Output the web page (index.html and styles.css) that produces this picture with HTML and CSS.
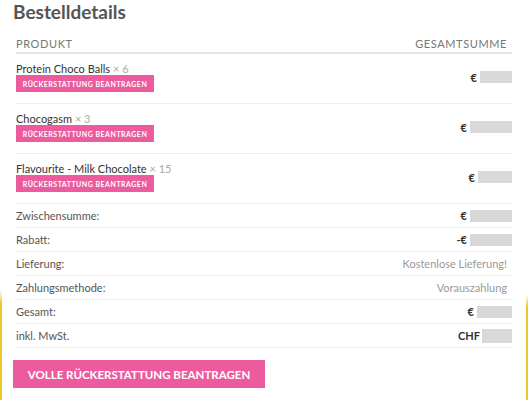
FILE: index.html
```html
<!DOCTYPE html>
<html lang="de">
<head>
<meta charset="utf-8">
<title>Bestelldetails</title>
<link rel="stylesheet" href="styles.css">
</head>
<body>
<div class="page">
  <h2 class="title">Bestelldetails</h2>
  <div class="table">
    <div class="row head">
      <span>Produkt</span>
      <span>Gesamtsumme</span>
    </div>
    <div class="row item">
      <div class="prod">
        <div class="name">Protein Choco Balls <span class="qty">× 6</span></div>
        <button class="refund">Rückerstattung beantragen</button>
      </div>
      <div class="amt"><span class="cur">€</span><span class="mask" style="width:32px"></span></div>
    </div>
    <div class="row item">
      <div class="prod">
        <div class="name">Chocogasm <span class="qty">× 3</span></div>
        <button class="refund">Rückerstattung beantragen</button>
      </div>
      <div class="amt"><span class="cur">€</span><span class="mask" style="width:42px"></span></div>
    </div>
    <div class="row item">
      <div class="prod">
        <div class="name">Flavourite - Milk Chocolate <span class="qty">× 15</span></div>
        <button class="refund">Rückerstattung beantragen</button>
      </div>
      <div class="amt"><span class="cur">€</span><span class="mask" style="width:34px"></span></div>
    </div>
    <div class="row tot">
      <span class="label">Zwischensumme:</span>
      <div class="amt"><span class="cur">€</span><span class="mask" style="width:42px"></span></div>
    </div>
    <div class="row tot">
      <span class="label">Rabatt:</span>
      <div class="amt"><span class="cur">-€</span><span class="mask" style="width:42px"></span></div>
    </div>
    <div class="row tot">
      <span class="label">Lieferung:</span>
      <span class="val">Kostenlose Lieferung!</span>
    </div>
    <div class="row tot">
      <span class="label">Zahlungsmethode:</span>
      <span class="val">Vorauszahlung</span>
    </div>
    <div class="row tot">
      <span class="label">Gesamt:</span>
      <div class="amt"><span class="cur">€</span><span class="mask" style="width:35px"></span></div>
    </div>
    <div class="row tot">
      <span class="label">inkl. MwSt.</span>
      <div class="amt"><span class="cur">CHF</span><span class="mask tall" style="width:30px"></span></div>
    </div>
  </div>
  <button class="full">Volle Rückerstattung beantragen</button>
</div>
<div class="edge left"></div>
<div class="edge right"></div>
</body>
</html>
```

FILE: styles.css
```css
* { box-sizing: border-box; }
html, body {
  margin: 0;
  background: #fff;
}
body {
  font-family: Lato, "Open Sans", sans-serif;
  color: #555;
  position: relative;
  width: 529px;
  height: 400px;
  overflow: hidden;
}
.page {
  padding-left: 13px;
  width: 512px;
}
.title {
  margin: 0;
  font-size: 19px;
  line-height: 23px;
  font-weight: 700;
  color: #555;
}
.table {
  margin-left: 3px;
  margin-top: 14px;
}
.row {
  display: flex;
  justify-content: space-between;
  align-items: center;
  border-bottom: 1px solid #efefef;
}
.head {
  font-size: 11px;
  line-height: 13px;
  text-transform: uppercase;
  letter-spacing: 0.6px;
  color: #777;
  padding: 0 5px 2px 0;
  border-bottom: 2px solid #e6e6e6;
}
.item {
  padding: 8px 0 11px;
}
.prod {
  display: flex;
  flex-direction: column;
  align-items: flex-start;
}
.name {
  font-size: 11px;
  line-height: 13px;
  color: #333;
  font-weight: 400;
}
.qty {
  color: #aaa;
}
.refund {
  border: 0;
  margin: 0;
  height: 17px;
  width: 138px;
  padding: 0;
  background: #ec5b9e;
  color: #fff;
  font-family: Lato, sans-serif;
  font-size: 7px;
  font-weight: 700;
  letter-spacing: 0.5px;
  white-space: nowrap;
  text-transform: uppercase;
}
.amt {
  display: flex;
  align-items: center;
  font-size: 11px;
  font-weight: 700;
  color: #333;
}
.cur {
  margin-right: 3px;
}
.mask {
  display: inline-block;
  height: 12px;
  background: #d9d9d9;
}
.mask.tall {
  height: 14px;
  margin-left: -1px;
}
.tot {
  height: 24px;
  font-size: 11px;
  line-height: 13px;
}
.label {
  color: #555;
  font-weight: 400;
}
.val {
  color: #999;
  padding-right: 5px;
}
.full {
  display: block;
  margin: 12px 0 0;
  width: 252px;
  height: 28px;
  border: 0;
  padding: 0;
  background: #ec5b9e;
  color: #fff;
  font-family: Lato, sans-serif;
  font-size: 11.5px;
  font-weight: 700;
  letter-spacing: 0;
  white-space: nowrap;
  text-transform: uppercase;
}
.edge {
  position: absolute;
  width: 2px;
  bottom: 0;
  background: linear-gradient(to bottom, rgba(234, 199, 15, 0), #ebc82a 14px);
}
.edge.left { left: 0; top: 290px; }
.edge.right { left: 526px; top: 294px; }
```
